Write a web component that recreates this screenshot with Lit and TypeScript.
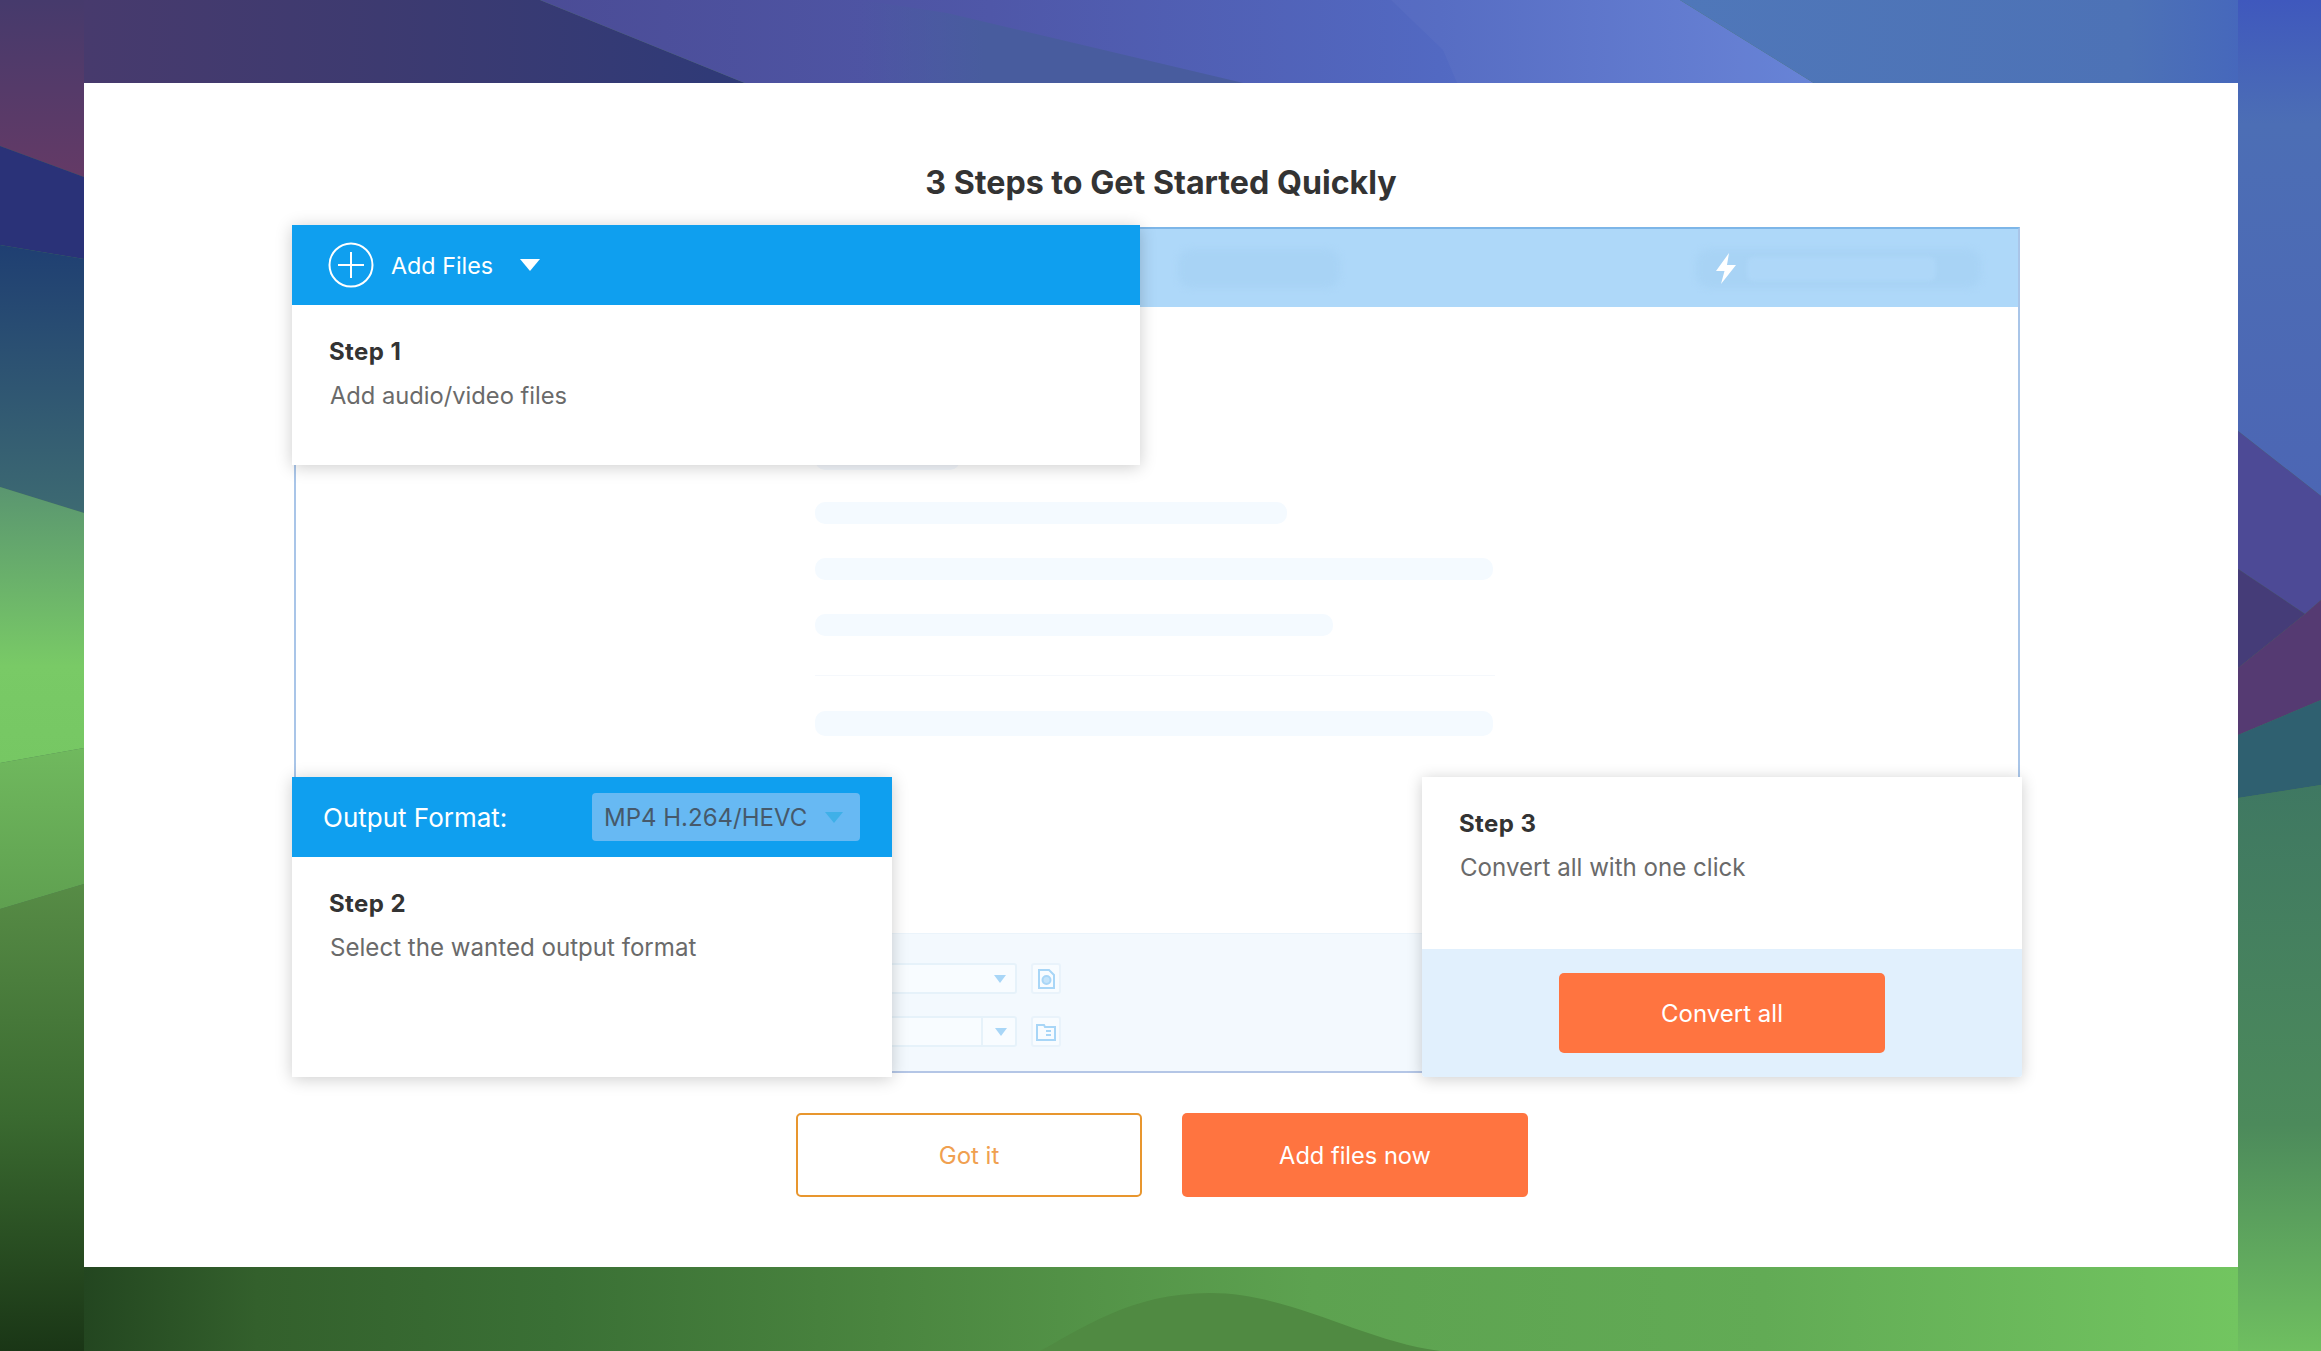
import { LitElement, html, css, svg } from "lit";
import { customElement } from "lit/decorators.js";

const wallpaper = svg`
<svg class="wall" viewBox="0 0 2321 1351" preserveAspectRatio="none" xmlns="http://www.w3.org/2000/svg">
  <defs>
    <linearGradient id="topL" x1="0" x2="1" y1="0" y2="0"><stop offset="0" stop-color="#4a3a6c"/><stop offset="0.5" stop-color="#3d3a70"/><stop offset="1" stop-color="#2e3a78"/></linearGradient>
    <linearGradient id="topM" x1="0" x2="1" y1="0" y2="0"><stop offset="0" stop-color="#4b4c96"/><stop offset="0.35" stop-color="#4f57a8"/><stop offset="0.7" stop-color="#5269c2"/><stop offset="1" stop-color="#6480d6"/></linearGradient>
    <linearGradient id="wedge" x1="0" x2="1" y1="0" y2="0"><stop offset="0" stop-color="#485c9e" stop-opacity="0"/><stop offset="0.3" stop-color="#485c9e"/><stop offset="1" stop-color="#485c9e"/></linearGradient>
    <linearGradient id="topR" x1="0" x2="1" y1="0" y2="0"><stop offset="0" stop-color="#4f77b9"/><stop offset="0.7" stop-color="#4d72b6"/><stop offset="1" stop-color="#4160c0"/></linearGradient>
    <linearGradient id="lTop" x1="0" x2="0" y1="0" y2="1"><stop offset="0" stop-color="#463a6c"/><stop offset="1" stop-color="#643a66"/></linearGradient>
    <linearGradient id="lTeal" x1="0" x2="0" y1="0" y2="1"><stop offset="0" stop-color="#1f3f72"/><stop offset="1" stop-color="#3d6a72"/></linearGradient>
    <linearGradient id="lGreen" x1="0" x2="0" y1="0" y2="1"><stop offset="0" stop-color="#5a9670"/><stop offset="0.65" stop-color="#79ca66"/><stop offset="1" stop-color="#76c763"/></linearGradient>
    <linearGradient id="lHill" x1="0" x2="0" y1="0" y2="1"><stop offset="0" stop-color="#70b95e"/><stop offset="1" stop-color="#5fa050"/></linearGradient>
    <linearGradient id="lDark" x1="0" x2="0" y1="0" y2="1"><stop offset="0" stop-color="#578c46"/><stop offset="0.5" stop-color="#3a6a30"/><stop offset="1" stop-color="#1a3616"/></linearGradient>
    <linearGradient id="rGreen" x1="0" x2="0" y1="0" y2="1"><stop offset="0" stop-color="#3f7862"/><stop offset="0.6" stop-color="#4c8a5b"/><stop offset="1" stop-color="#6fbf60"/></linearGradient>
    <linearGradient id="rTop" x1="0" x2="0" y1="0" y2="1"><stop offset="0" stop-color="#3f58bd"/><stop offset="0.25" stop-color="#4c6eb5"/><stop offset="1" stop-color="#4c66b4"/></linearGradient>
    <linearGradient id="bot" x1="0" x2="1" y1="0" y2="0"><stop offset="0" stop-color="#234620"/><stop offset="0.08" stop-color="#33602c"/><stop offset="0.22" stop-color="#3a7035"/><stop offset="0.37" stop-color="#4a853f"/><stop offset="0.57" stop-color="#5da250"/><stop offset="0.78" stop-color="#62ab55"/><stop offset="1" stop-color="#72c560"/></linearGradient>
  </defs>
  <rect width="2321" height="1351" fill="#4a7a50"/>
  <path d="M0 0H540L762 90H0Z" fill="url(#topL)"/>
  <path d="M540 0H1680L1825 90H762Z" fill="url(#topM)"/>
  <path d="M860 0L947 13L1273 90H860Z" fill="url(#wedge)"/>
  <path d="M1391 0L1443 50L1460 90H1825L1680 0Z" fill="#fff" fill-opacity="0.03"/>
  <path d="M1680 0H2321V90H1825Z" fill="url(#topR)"/>
  <path d="M0 0H84V177L0 146Z" fill="url(#lTop)"/>
  <path d="M0 146L84 177V259L0 245Z" fill="#2a3278"/>
  <path d="M0 245L84 259V513L0 487Z" fill="url(#lTeal)"/>
  <path d="M0 487L84 513V748L0 763Z" fill="url(#lGreen)"/>
  <path d="M0 763L84 748V884L0 909Z" fill="url(#lHill)"/>
  <path d="M0 909L84 884V1351H0Z" fill="url(#lDark)"/>
  <path d="M2238 0H2321V496L2238 431Z" fill="url(#rTop)"/>
  <path d="M2238 431L2321 496V600L2305 614L2238 569Z" fill="#4d4a96"/>
  <path d="M2238 569L2305 614L2238 668Z" fill="#453c78"/>
  <path d="M2238 668L2305 614L2321 600V700L2238 735Z" fill="#553a72"/>
  <path d="M2238 735L2321 700V785L2238 798Z" fill="#2f6070"/>
  <path d="M2238 798L2321 785V1351H2238Z" fill="url(#rGreen)"/>
  <rect x="84" y="1260" width="2154" height="91" fill="url(#bot)"/>
  <path d="M1040 1351C1080 1330 1130 1293 1210 1293C1290 1293 1360 1340 1440 1351Z" fill="#508a42"/>
</svg>`;

@customElement("app-root")
export class AppRoot extends LitElement {
  static styles = css`
    :host {
      display: block;
      position: relative;
      width: 2321px;
      height: 1351px;
      overflow: hidden;
      font-family: Inter, "Liberation Sans", sans-serif;
      box-sizing: border-box;
      padding: 83px 83px 84px 84px;
    }
    * { box-sizing: border-box; }
    .wall { position: absolute; inset: 0; width: 100%; height: 100%; display: block; }
    .card {
      position: relative;
      height: 1184px;
      background: #fff;
      display: flex;
      flex-direction: column;
      padding: 0 216px 0 208px;
    }
    h1 {
      margin: 0;
      height: 142px;
      padding: 80px 0 0 8px;
      text-align: center;
      font-size: 32.2px;
      line-height: 40px;
      font-weight: 700;
      color: #333;
    }
    .stage { position: relative; height: 852px; padding: 2px 2px 4px 2px; }
    .frame {
      height: 100%;
      display: flex;
      flex-direction: column;
      border-left: 2px solid #a9c5e8;
      border-right: 2px solid #a9c5e8;
      border-top: 2px solid #7db6e8;
      border-bottom: 2px solid #b4c6e6;
    }
    .fhead {
      height: 78px;
      background: #aed8f9;
      display: flex;
      align-items: center;
      padding-left: 882px;
      flex: none;
    }
    .pill1 {
      width: 162px;
      height: 39px;
      border-radius: 14px;
      background: #a8d3f5;
      filter: blur(3px);
      flex: none;
    }
    .pill2 {
      margin-left: 356px;
      width: 285px;
      height: 39px;
      border-radius: 14px;
      background: #a8d3f5;
      filter: blur(3px);
      flex: none;
    }
    .pill2wrap { position: relative; display: flex; flex: none; }
    .pill2wrap .inner {
      position: absolute;
      left: 407px;
      top: 8px;
      width: 189px;
      height: 24px;
      border-radius: 6px;
      background: #aed7f8;
      filter: blur(2px);
    }
    .bolt { position: absolute; left: 374px; top: 4px; width: 24px; height: 31px; }
    .fbody {
      flex: 1;
      padding: 141px 0 0 519px;
      display: flex;
      flex-direction: column;
      filter: blur(0.6px);
    }
    .bar { height: 22px; border-radius: 10px; background: #f4faff; flex: none; margin-bottom: 34px; }
    .bar.faint { margin-bottom: 32px; background: #f5f9fe; }
    .rule { height: 1px; background: #f5f8fc; width: 680px; margin: 5px 0 35px; flex: none; }
    .bar.tall { height: 25px; margin: 0; width: 678px; }
    .panel {
      height: 138px;
      flex: none;
      background: #f3f9fe;
      border-top: 1px solid #ebf4fb;
      padding: 29px 0 0 554px;
      display: flex;
      flex-direction: column;
      gap: 22px;
      filter: blur(0.4px);
    }
    .prow { display: flex; gap: 14px; height: 31px; }
    .sel {
      width: 167px;
      border: 2px solid #e6f2fa;
      border-radius: 3px;
      background: #f8fcff;
      display: flex;
      justify-content: flex-end;
      align-items: center;
    }
    .arrow { width: 34px; height: 100%; display: flex; align-items: center; justify-content: center; padding-left: 3px; }
    .arrow.div { border-left: 2px solid #e6f2fa; }
    .arrow span {
      width: 0; height: 0;
      border-left: 6px solid transparent;
      border-right: 6px solid transparent;
      border-top: 8px solid #a8d6f7;
    }
    .ibox {
      width: 30px;
      border: 2px solid #e9f3fb;
      border-radius: 3px;
      background: #f8fcff;
      display: flex;
      align-items: center;
      justify-content: center;
    }
    .pop {
      position: absolute;
      background: #fff;
      box-shadow: 0 2px 16px rgba(0, 0, 0, 0.2);
      display: flex;
      flex-direction: column;
    }
    .pop1 { left: 0; top: 0; width: 848px; height: 240px; }
    .pop2 { left: 0; top: 552px; width: 600px; height: 300px; }
    .pop3 { right: 0; top: 552px; width: 600px; height: 300px; border-radius: 0 0 3px 3px; }
    .phead {
      height: 80px;
      flex: none;
      background: #0f9fef;
      color: #fff;
      display: flex;
      align-items: center;
    }
    .pop1 .phead { padding-left: 36px; font-size: 23.3px; }
    .plus { width: 46px; height: 46px; flex: none; margin-right: 17px; }
    .tri {
      width: 0; height: 0;
      margin-left: 27px;
      border-left: 10px solid transparent;
      border-right: 10px solid transparent;
      border-top: 12px solid #fff;
    }
    .pop2 .phead { padding-left: 31px; }
    .label { width: 269px; flex: none; font-size: 26px; }
    .select {
      width: 268px;
      height: 48px;
      flex: none;
      background: #67b9f3;
      border-radius: 4px;
      color: #46596b;
      font-size: 24px;
      display: flex;
      align-items: center;
      padding-left: 12px;
    }
    .select .caret {
      margin-left: 18px;
      width: 0; height: 0;
      border-left: 9px solid transparent;
      border-right: 9px solid transparent;
      border-top: 11px solid #3fb0e8;
    }
    .pbody { padding: 32px 0 0 37px; flex: 1; }
    .step { font-size: 24px; font-weight: 700; color: #333; line-height: 30px; letter-spacing: 0.4px; }
    .desc { font-size: 24.1px; color: #6a6a6a; line-height: 30px; margin: 14px 0 0 1px; }
    .desc.tight { font-size: 23.7px; }
    .pfoot {
      height: 128px;
      flex: none;
      background: #e1f0fd;
      display: flex;
      align-items: flex-start;
      justify-content: center;
      padding-top: 24px;
      border-radius: 0 0 3px 3px;
    }
    .btn {
      border: 0;
      font-family: inherit;
      font-size: 24px;
      border-radius: 5px;
      background: #ff7440;
      color: #fff;
      display: flex;
      align-items: center;
      justify-content: center;
    }
    .pfoot .btn { width: 326px; height: 80px; }
    .actions { display: flex; justify-content: center; gap: 40px; margin-top: 36px; padding-left: 10px; }
    .actions .btn { width: 346px; height: 84px; font-size: 23.6px; }
    .actions .btn.ghost { background: #fff; border: 2px solid #e8962e; color: #f0a050; font-size: 24px; }
  `;

  render() {
    return html`
      ${wallpaper}
      <div class="card">
        <h1>3 Steps to Get Started Quickly</h1>
        <div class="stage">
          <div class="frame">
            <div class="fhead">
              <div class="pill1"></div>
              <div class="pill2wrap">
                <div class="pill2"></div>
                <div class="inner"></div>
                <svg class="bolt" viewBox="0 0 24 31"><path d="M15 0L2 18H10.5L7 31L22 12H13Z" fill="#fff"/></svg>
              </div>
            </div>
            <div class="fbody">
              <div class="bar faint" style="width:145px"></div>
              <div class="bar" style="width:472px"></div>
              <div class="bar" style="width:678px"></div>
              <div class="bar" style="width:518px"></div>
              <div class="rule"></div>
              <div class="bar tall"></div>
            </div>
            <div class="panel">
              <div class="prow">
                <div class="sel"><div class="arrow"><span></span></div></div>
                <div class="ibox">
                  <svg width="18" height="20" viewBox="0 0 18 20" fill="none" stroke="#a8d6f7" stroke-width="2"><path d="M2 1H12L17 6V19H2Z"/><circle cx="9.5" cy="11" r="4" fill="#c3e3fa"/></svg>
                </div>
              </div>
              <div class="prow">
                <div class="sel"><div class="arrow div"><span></span></div></div>
                <div class="ibox">
                  <svg width="20" height="18" viewBox="0 0 20 18" fill="none" stroke="#a8d6f7" stroke-width="2"><path d="M1 17V2H8L9 4H19V17Z"/><path d="M10 8H15M10 12H15"/></svg>
                </div>
              </div>
            </div>
          </div>

          <div class="pop pop1">
            <div class="phead">
              <svg class="plus" viewBox="0 0 46 46" fill="none" stroke="#fff" stroke-width="2"><circle cx="23" cy="23" r="21.5"/><path d="M23 10V36M10 23H36"/></svg>
              <span>Add Files</span>
              <span class="tri"></span>
            </div>
            <div class="pbody">
              <div class="step">Step 1</div>
              <div class="desc tight">Add audio/video files</div>
            </div>
          </div>

          <div class="pop pop2">
            <div class="phead">
              <span class="label">Output Format:</span>
              <span class="select">MP4 H.264/HEVC<span class="caret"></span></span>
            </div>
            <div class="pbody">
              <div class="step">Step 2</div>
              <div class="desc">Select the wanted output format</div>
            </div>
          </div>

          <div class="pop pop3">
            <div class="pbody">
              <div class="step">Step 3</div>
              <div class="desc">Convert all with one click</div>
            </div>
            <div class="pfoot"><div class="btn">Convert all</div></div>
          </div>
        </div>
        <div class="actions">
          <div class="btn ghost">Got it</div>
          <div class="btn">Add files now</div>
        </div>
      </div>
    `;
  }
}
